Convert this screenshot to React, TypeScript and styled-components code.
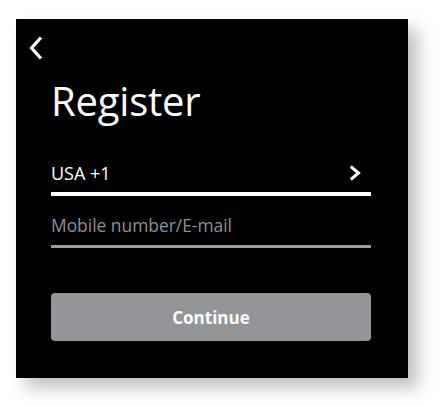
import React from "react";
import styled, { createGlobalStyle } from "styled-components";

const GlobalStyle = createGlobalStyle`
  html, body {
    margin: 0;
    padding: 0;
    background: #ffffff;
  }
  body {
    font-family: "Open Sans", "Liberation Sans", sans-serif;
  }
`;

const Page = styled.div`
  width: 440px;
  height: 406px;
  box-sizing: border-box;
  padding: 19px 32px 0 16px;
`;

const Card = styled.div`
  width: 392px;
  height: 359px;
  box-sizing: border-box;
  background: #000000;
  box-shadow: 10px 10px 16px rgba(0, 0, 0, 0.25);
  padding: 17px 37px 0 35px;
  display: flex;
  flex-direction: column;
`;

const BackButton = styled.button`
  all: unset;
  display: block;
  width: 14px;
  height: 24px;
  margin-left: -22px;
  cursor: pointer;
  svg {
    display: block;
  }
`;

const Title = styled.h1`
  margin: 21px 0 0 0;
  font-size: 40px;
  line-height: 40px;
  font-weight: 400;
  color: #ffffff;
  letter-spacing: -0.2px;
`;

const CountryRow = styled.div`
  margin-top: 40px;
  display: flex;
  align-items: center;
  justify-content: space-between;
  padding-bottom: 7px;
  border-bottom: 4px solid #ffffff;
`;

const CountryText = styled.span`
  font-size: 18px;
  line-height: 24px;
  color: #ffffff;
`;

const Chevron = styled.svg`
  display: block;
  margin-right: 10px;
`;

const Field = styled.input`
  margin-top: 17px;
  display: block;
  width: 100%;
  box-sizing: border-box;
  height: 35px;
  padding: 0 0 8px 0;
  border: none;
  border-bottom: 3px solid #9a9a9c;
  background: transparent;
  outline: none;
  font-family: "Open Sans", "Liberation Sans", sans-serif;
  font-size: 17.4px;
  line-height: 24px;
  color: #ffffff;
  &::placeholder {
    color: #909092;
    opacity: 1;
  }
`;

const ContinueButton = styled.button`
  margin-top: 45px;
  width: 100%;
  height: 48px;
  border: none;
  border-radius: 4px;
  background: #939598;
  color: #ffffff;
  font-family: "Open Sans", "Liberation Sans", sans-serif;
  font-size: 17px;
  font-weight: 700;
  cursor: pointer;
`;

export default function App() {
  return (
    <>
      <GlobalStyle />
      <Page>
        <Card>
          <BackButton aria-label="Back">
            <svg width="14" height="24" viewBox="0 0 14 24">
              <polyline
                points="12,1.5 2.5,12 12,22.5"
                fill="none"
                stroke="#ffffff"
                strokeWidth="3.2"
              />
            </svg>
          </BackButton>
          <Title>Register</Title>
          <CountryRow>
            <CountryText>USA +1</CountryText>
            <Chevron width="12" height="16" viewBox="0 0 12 16">
              <polyline
                points="1.8,1.5 9.5,8 1.8,14.5"
                fill="none"
                stroke="#ffffff"
                strokeWidth="3"
              />
            </Chevron>
          </CountryRow>
          <Field placeholder="Mobile number/E-mail" />
          <ContinueButton>Continue</ContinueButton>
        </Card>
      </Page>
    </>
  );
}
